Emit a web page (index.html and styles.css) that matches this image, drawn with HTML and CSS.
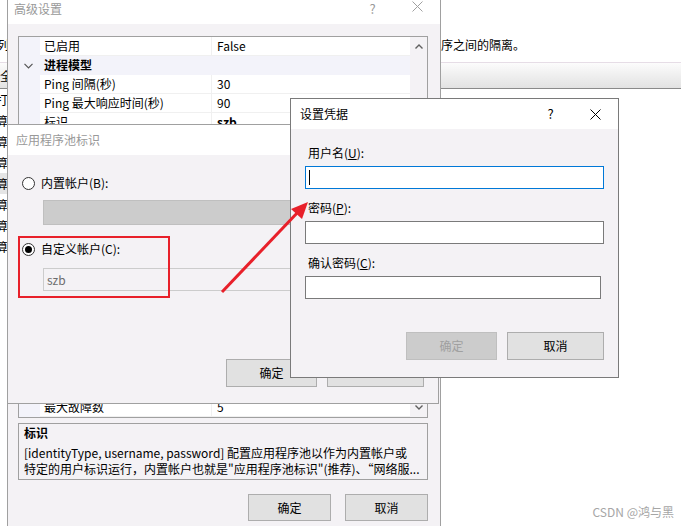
FILE: index.html
```html
<!DOCTYPE html>
<html lang="zh-CN">
<head>
  <meta charset="UTF-8">
  <meta name="viewport" content="width=device-width, initial-scale=1.0">
  <title>应用程序池 - 设置凭据</title>
  <link rel="stylesheet" href="styles.css">
</head>
<body>
<div class="desktop">

  <!-- 背后的 IIS 页面 -->
  <div class="page">
    <div class="page-desc">列表。应用程序池与工作进程相关联，包含一个或多个应用程序，并提供不同应用程序之间的隔离。</div>
    <div class="page-toolbar">全部</div>
    <ul class="page-list">
      <li>打开</li>
      <li>算机</li>
      <li>算机</li>
      <li>算机</li>
      <li class="sel">算机</li>
      <li>算机</li>
      <li>算机</li>
      <li>算机</li>
    </ul>
  </div>

  <!-- 高级设置 -->
  <div class="win adv">
    <div class="titlebar inactive">
      <span class="title">高级设置</span>
      <span class="tb-btn">?</span>
      <span class="tb-btn">
        <svg width="11" height="11" viewBox="0 0 11 11"><path d="M0.5 0.5L10.5 10.5M10.5 0.5L0.5 10.5" stroke="#a0a0a0" stroke-width="1"/></svg>
      </span>
    </div>
    <div class="adv-body">
      <div class="grid">
        <div class="grid-rows">
          <div class="row"><span class="gutter"></span><span class="name">已启用</span><span class="value">False</span></div>
          <div class="row cat">
            <span class="gutter"><svg width="9" height="6" viewBox="0 0 9 6"><path d="M0.5 0.8L4.5 4.8L8.5 0.8" fill="none" stroke="#555" stroke-width="1.2"/></svg></span>
            <span class="name">进程模型</span>
          </div>
          <div class="row"><span class="gutter"></span><span class="name">Ping 间隔(秒)</span><span class="value">30</span></div>
          <div class="row"><span class="gutter"></span><span class="name">Ping 最大响应时间(秒)</span><span class="value">90</span></div>
          <div class="row"><span class="gutter"></span><span class="name">标识</span><span class="value changed">szb</span></div>
          <div class="row"><span class="gutter"></span><span class="name">空闲超时(分钟)</span><span class="value">20</span></div>
          <div class="row"><span class="gutter"></span><span class="name">空闲超时操作</span><span class="value">Terminate</span></div>
          <div class="row"><span class="gutter"></span><span class="name">关闭时间限制(秒)</span><span class="value">90</span></div>
          <div class="row"><span class="gutter"></span><span class="name">加载用户配置文件</span><span class="value">True</span></div>
          <div class="row"><span class="gutter"></span><span class="name">启动时间限制(秒)</span><span class="value">90</span></div>
          <div class="row"><span class="gutter"></span><span class="name">启用 Ping</span><span class="value">True</span></div>
          <div class="row"><span class="gutter"></span><span class="name">最大工作进程数</span><span class="value">1</span></div>
          <div class="row"><span class="gutter"></span><span class="name">生成进程模型事件日志条目</span><span class="value"></span></div>
          <div class="row cat">
            <span class="gutter"><svg width="9" height="6" viewBox="0 0 9 6"><path d="M0.5 0.8L4.5 4.8L8.5 0.8" fill="none" stroke="#555" stroke-width="1.2"/></svg></span>
            <span class="name">快速故障防护</span>
          </div>
          <div class="row"><span class="gutter"></span><span class="name">"服务不可用"响应类型</span><span class="value">HttpLevel</span></div>
          <div class="row"><span class="gutter"></span><span class="name">故障间隔(分钟)</span><span class="value">5</span></div>
          <div class="row"><span class="gutter"></span><span class="name">关闭可执行文件</span><span class="value"></span></div>
          <div class="row"><span class="gutter"></span><span class="name">关闭可执行文件参数</span><span class="value"></span></div>
          <div class="row"><span class="gutter"></span><span class="name">已启用</span><span class="value">True</span></div>
          <div class="row"><span class="gutter"></span><span class="name">最大故障数</span><span class="value">5</span></div>
        </div>
        <div class="scroll">
          <span class="scroll-btn"><svg width="8" height="5" viewBox="0 0 8 5"><path d="M0.5 4.5L4 1L7.5 4.5" fill="none" stroke="#606060" stroke-width="1.4"/></svg></span>
          <span class="scroll-btn"><svg width="8" height="5" viewBox="0 0 8 5"><path d="M0.5 0.5L4 4L7.5 0.5" fill="none" stroke="#606060" stroke-width="1.4"/></svg></span>
        </div>
      </div>
      <div class="desc-box">
        <div class="desc-title">标识</div>
        <div class="desc-line">[identityType, username, password] 配置应用程序池以作为内置帐户或</div>
        <div class="desc-line">特定的用户标识运行，内置帐户也就是"应用程序池标识"(推荐)、“网络服...</div>
      </div>
      <div class="btn-row">
        <button class="btn">确定</button>
        <button class="btn">取消</button>
      </div>
    </div>
  </div>

  <!-- 应用程序池标识 -->
  <div class="win pool">
    <div class="titlebar inactive">
      <span class="title">应用程序池标识</span>
      <span class="tb-btn">?</span>
      <span class="tb-btn">
        <svg width="11" height="11" viewBox="0 0 11 11"><path d="M0.5 0.5L10.5 10.5M10.5 0.5L0.5 10.5" stroke="#a0a0a0" stroke-width="1"/></svg>
      </span>
    </div>
    <div class="pool-body">
      <div class="radio-row"><span class="radio"></span>内置帐户(B):</div>
      <div class="combo"></div>
      <div class="radio-row second"><span class="radio on"></span>自定义帐户(C):</div>
      <div class="textbox disabled">szb</div>
      <div class="btn-row">
        <button class="btn ok">确定</button>
        <!-- 标签被“设置凭据”挡住 -->
        <button class="btn cancel" aria-label="取消"></button>
      </div>
    </div>
  </div>

  <!-- 设置凭据 -->
  <div class="win cred">
    <div class="titlebar">
      <span class="title">设置凭据</span>
      <span class="tb-btn">?</span>
      <span class="tb-btn">
        <svg width="11" height="11" viewBox="0 0 11 11"><path d="M0.5 0.5L10.5 10.5M10.5 0.5L0.5 10.5" stroke="#000" stroke-width="1"/></svg>
      </span>
    </div>
    <div class="cred-body">
      <div class="field-label">用户名(<u>U</u>):</div>
      <div class="textbox focus"><span class="caret"></span></div>
      <div class="field-label">密码(<u>P</u>):</div>
      <div class="textbox"></div>
      <div class="field-label">确认密码(<u>C</u>):</div>
      <div class="textbox short"></div>
      <div class="btn-row">
        <button class="btn ok" disabled>确定</button>
        <button class="btn cancel">取消</button>
      </div>
    </div>
  </div>

  <!-- 截图上的红色标注 -->
  <svg class="marks" width="681" height="526" viewBox="0 0 681 526">
    <rect x="19" y="237" width="150" height="60" fill="none" stroke="#e8202a" stroke-width="2"/>
    <line x1="222" y1="292" x2="299" y2="211" stroke="#e8202a" stroke-width="3"/>
    <polygon points="308,202 302,219 291,209" fill="#e8202a"/>
  </svg>

  <div class="watermark">CSDN @鸿与黑</div>
</div>
</body>
</html>
```

FILE: styles.css
```css
* {
  box-sizing: border-box;
}

body {
  margin: 0;
  font-family: "Noto Sans CJK SC", "Noto Sans", sans-serif;
  font-size: 12px;
  line-height: 16px;
  color: #000;
  background: #fff;
}

.desktop {
  position: relative;
  width: 681px;
  height: 526px;
  overflow: hidden;
}

/* 背后的页面 */
.page {
  padding-top: 37px;
}

.page-desc {
  margin-left: -3px;
  white-space: nowrap;
}

.page-toolbar {
  margin-top: 9px;
  height: 27px;
  line-height: 25px;
  border-top: 1px solid #e6dde6;
  border-bottom: 1px solid #8a8a8a;
  background: linear-gradient(#fcfcfc, #e2e2e2);
  white-space: nowrap;
}

.page-list {
  list-style: none;
  margin: 0;
  padding: 0;
  width: 160px;
}

.page-list li {
  height: 21px;
  line-height: 21px;
  margin-left: -4px;
  white-space: nowrap;
}

.page-list .sel {
  background: #e5e5e5;
}

/* 窗口 */
.win {
  position: absolute;
  display: flex;
  flex-direction: column;
  background: #f4f2f5;
  border: 1px solid #a0a0a0;
}

.titlebar {
  display: flex;
  align-items: center;
  flex-shrink: 0;
  background: #fff;
}

.title {
  flex: 1;
  white-space: nowrap;
}

.tb-btn {
  width: 45px;
  display: flex;
  justify-content: center;
  align-items: center;
  font-size: 13px;
}

.inactive .title,
.inactive .tb-btn {
  color: #999;
}

.btn-row {
  display: flex;
  justify-content: flex-end;
}

.btn {
  font: inherit;
  color: #000;
  background: #e1e1e1;
  border: 1px solid #adadad;
  border-radius: 0;
  padding: 0;
}

.btn:disabled {
  color: #a0a0a0;
  background: #cccccc;
  border-color: #bfbfbf;
}

.textbox {
  height: 23px;
  line-height: 21px;
  background: #fff;
  border: 1px solid #7a7a7a;
  padding-left: 3px;
}

/* 高级设置 */
.adv {
  left: 7px;
  top: -1px;
  width: 434px;
  height: 560px;
}

.adv .titlebar {
  height: 24px;
  align-items: flex-start;
  padding-top: 1px;
}

.adv .title {
  padding-left: 6px;
}

.adv-body {
  padding: 12px 12px 0 10px;
}

.grid {
  display: flex;
  border: 1px solid #a0a0a0;
  background: #fff;
}

.grid-rows {
  flex: 1;
}

.row {
  display: flex;
  height: 19px;
  line-height: 18px;
  white-space: nowrap;
}

.gutter {
  width: 21px;
  flex-shrink: 0;
  background: #f3f3fa;
  display: flex;
  justify-content: center;
  align-items: center;
  padding-right: 3px;
}

.name {
  width: 172px;
  flex-shrink: 0;
  padding-left: 4px;
  border-bottom: 1px solid #f0f0f0;
  border-right: 1px solid #f0f0f0;
  overflow: hidden;
}

.value {
  flex: 1;
  padding-left: 5px;
  border-bottom: 1px solid #f0f0f0;
}

.value.changed {
  font-weight: bold;
}

.cat .name {
  flex: 1;
  font-weight: bold;
  background: #f3f3fa;
  border: none;
}

.scroll {
  width: 17px;
  display: flex;
  flex-direction: column;
  justify-content: space-between;
  background: #f4f2f5;
}

.scroll-btn {
  height: 19px;
  display: flex;
  justify-content: center;
  align-items: center;
}

.desc-box {
  margin-top: 5px;
  height: 57px;
  border: 1px solid #a0a0a0;
  padding: 1px 5px 0;
  white-space: nowrap;
  overflow: hidden;
}

.desc-title {
  font-weight: bold;
  margin-bottom: 4px;
}

.adv .btn-row {
  margin-top: 14px;
  gap: 14px;
}

.adv .btn {
  width: 83px;
  height: 27px;
}

/* 应用程序池标识 */
.pool {
  left: 7px;
  top: 124px;
  width: 432px;
  height: 280px;
}

.pool .titlebar {
  height: 30px;
}

.pool .title {
  padding-left: 8px;
}

.pool-body {
  flex: 1;
  display: flex;
  flex-direction: column;
  padding: 20px 14px 16px 14px;
}

.radio-row {
  display: flex;
  align-items: center;
  height: 16px;
}

.radio-row.second {
  margin-top: 16px;
}

.radio {
  position: relative;
  width: 13px;
  height: 13px;
  margin-right: 6px;
  border: 1px solid #333;
  border-radius: 50%;
  background: #fff;
}

.radio.on::after {
  content: "";
  position: absolute;
  left: 2px;
  top: 2px;
  width: 7px;
  height: 7px;
  border-radius: 50%;
  background: #000;
}

.combo {
  margin: 9px 0 0 21px;
  width: 380px;
  height: 25px;
  background: #cccccc;
  border: 1px solid #bfbfbf;
}

.textbox.disabled {
  margin: 11px 0 0 21px;
  width: 380px;
  color: #6d6d6d;
  background: #f4f2f5;
  border-color: #cccccc;
}

.pool .btn-row {
  margin-top: auto;
  gap: 10px;
}

.pool .btn,
.cred .btn {
  height: 28px;
}

.btn.ok {
  width: 91px;
}

.btn.cancel {
  width: 97px;
}

/* 设置凭据 */
.cred {
  left: 290px;
  top: 98px;
  width: 329px;
  height: 280px;
  border-color: #7a7a7a;
}

.cred .titlebar {
  height: 30px;
}

.cred .title {
  padding-left: 9px;
}

.cred-body {
  flex: 1;
  display: flex;
  flex-direction: column;
  padding: 16px 14px 17px;
}

.field-label {
  padding-left: 3px;
  margin-bottom: 5px;
}

.textbox + .field-label {
  margin-top: 11px;
}

.textbox.focus {
  border-color: #0078d7;
  display: flex;
  align-items: center;
}

.caret {
  width: 1px;
  height: 15px;
  background: #000;
}

.textbox.short {
  width: 296px;
}

.cred .btn-row {
  margin-top: auto;
  gap: 10px;
}

/* 标注 */
.marks {
  position: absolute;
  left: 0;
  top: 0;
  pointer-events: none;
}

.watermark {
  position: absolute;
  right: 7px;
  bottom: 6px;
  color: #a6a6a6;
  white-space: nowrap;
}
```
